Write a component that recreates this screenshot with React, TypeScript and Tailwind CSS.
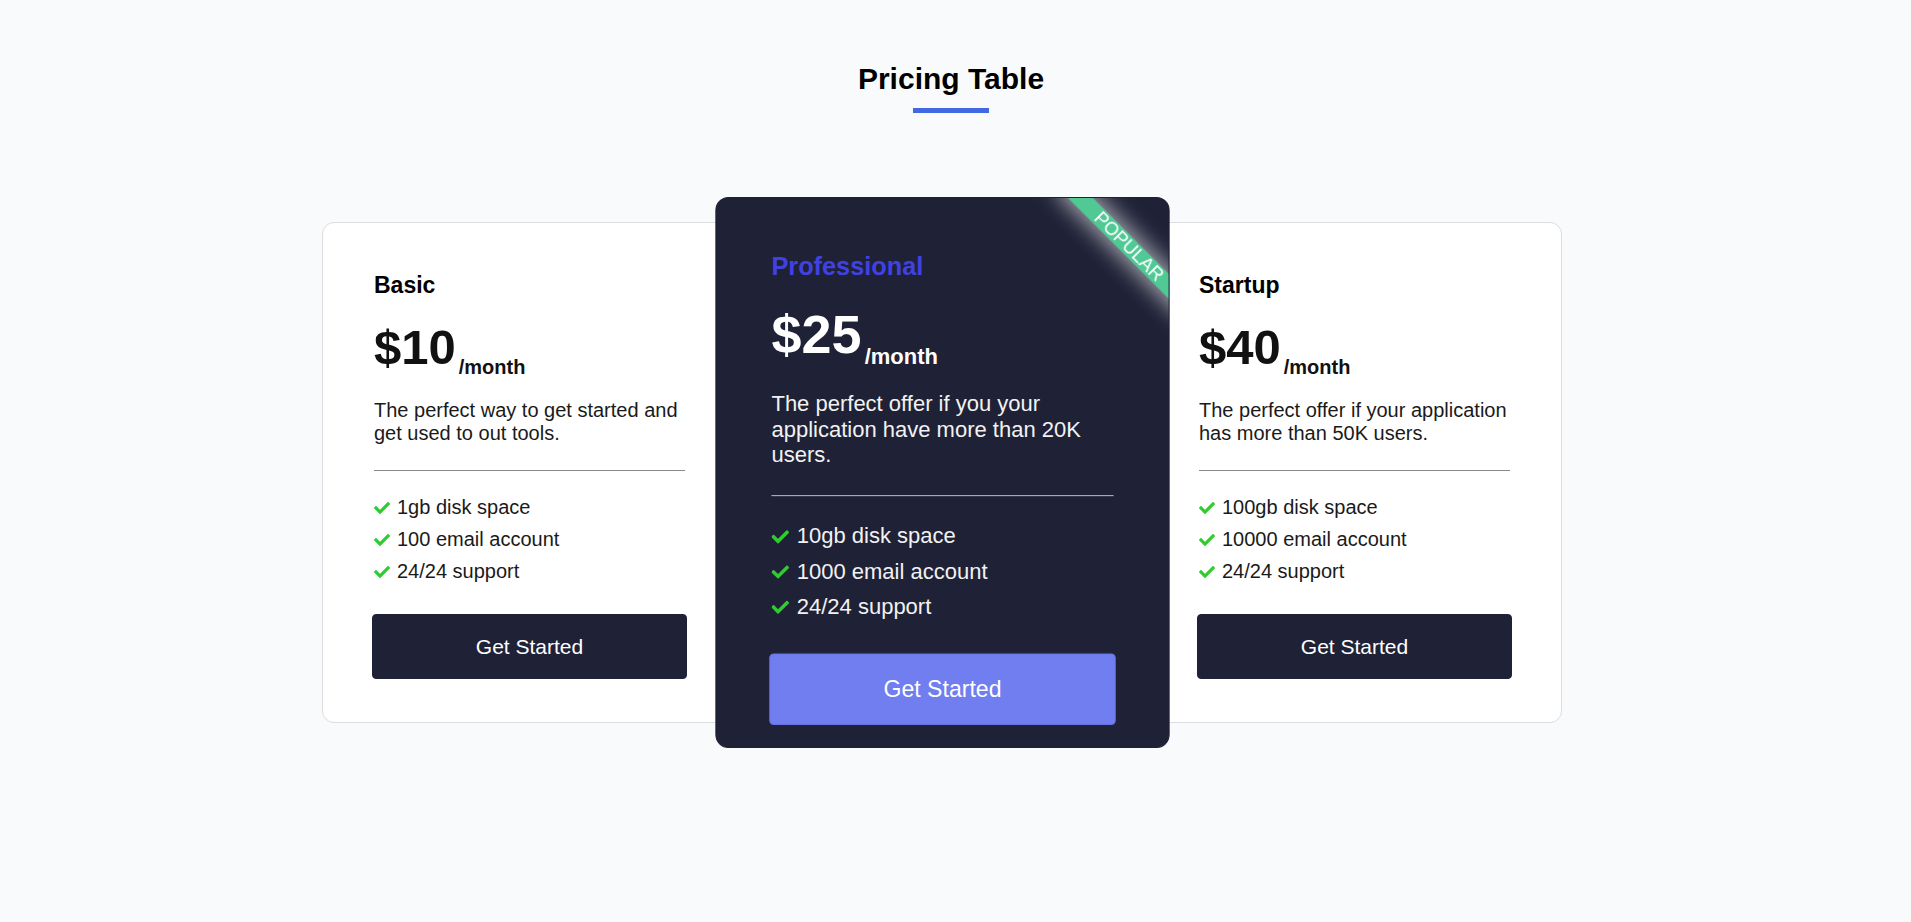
import { FaCheck } from "react-icons/fa";

type Plan = {
	name: string;
	price: string;
	description: string;
	features: string[];
	featured?: boolean;
};

const plans: Plan[] = [
	{
		name: "Basic",
		price: "$10",
		description: "The perfect way to get started and get used to out tools.",
		features: ["1gb disk space", "100 email account", "24/24 support"],
	},
	{
		name: "Professional",
		price: "$25",
		description:
			"The perfect offer if you your application have more than 20K users.",
		features: ["10gb disk space", "1000 email account", "24/24 support"],
		featured: true,
	},
	{
		name: "Startup",
		price: "$40",
		description:
			"The perfect offer if your application has more than 50K users.",
		features: ["100gb disk space", "10000 email account", "24/24 support"],
	},
];

function PlanCard({ plan, index }: { plan: Plan; index: number }) {
	const dark = plan.featured;

	return (
		<div
			className={`relative h-[501px] shrink-0 overflow-hidden rounded-[12px] border pt-[49px] ${
				dark
					? "z-10 ml-[-1px] w-[413px] scale-110 border-[#1f2237] bg-[#1f2237] px-[50px] text-white"
					: "w-[415px] border-[#dcdde0] bg-white px-[51px] text-[#111]"
			} ${index === 2 ? "ml-[-2px]" : ""}`}
		>
			{dark && (
				<div className="absolute top-[36px] right-[-44px] h-[16px] w-[160px] rotate-45 bg-[#50c994] text-center text-[17px] leading-[16px] text-white shadow-[0_0_18px_5px_rgba(255,255,255,0.55)]">
					POPULAR
				</div>
			)}

			<h3
				className={`text-[23px] font-bold leading-[26px] ${
					dark ? "text-[#4141e1]" : "text-black"
				}`}
			>
				{plan.name}
			</h3>

			<div className="mt-[25px] flex items-baseline">
				<span className="text-[49px] font-bold leading-[48px]">
					{plan.price}
				</span>
				<span className="relative top-[10px] ml-[3px] text-[20px] font-bold">
					/month
				</span>
			</div>

			<p
				className={`mt-[27px] text-[20px] leading-[23px] ${
					dark ? "text-[#f2f2f2]" : "text-[#1a1a1a]"
				}`}
			>
				{plan.description}
			</p>

			<hr
				className={`mt-[25px] border-t ${
					dark ? "border-[#b0b2ba]" : "border-[#8a8a8a]"
				}`}
			/>

			<ul className="mt-[25px] flex flex-col gap-[9px]">
				{plan.features.map((feature) => (
					<li
						key={feature}
						className={`flex items-center text-[20px] leading-[23px] ${
							dark ? "text-[#f2f2f2]" : "text-[#1a1a1a]"
						}`}
					>
						<FaCheck className="mr-[7px] h-[16px] w-[16px] shrink-0 text-[#2ecc2e]" />
						{feature}
					</li>
				))}
			</ul>

			<button
				type="button"
				className={`mx-[-2px] mt-[31px] h-[65px] w-[calc(100%+4px)] rounded-[4px] border text-[21px] text-white ${
					dark
						? "border-[#6673e6] bg-[#707ef0]"
						: "border-[#1f2237] bg-[#1f2237]"
				}`}
			>
				Get Started
			</button>
		</div>
	);
}

export default function App() {
	return (
		<div className="min-h-screen bg-[#f9fafb] font-['Liberation_Sans',Arial,sans-serif]">
			<div className="flex flex-col items-center pt-[62px] pr-[9px]">
				<h1 className="text-[30px] font-bold leading-[34px] text-black">
					Pricing Table
				</h1>
				<div className="mt-[12px] h-[5px] w-[76px] bg-[#4169e1]" />
			</div>

			<div className="ml-[322px] mt-[109px] flex">
				{plans.map((plan, index) => (
					<PlanCard key={plan.name} plan={plan} index={index} />
				))}
			</div>
		</div>
	);
}
